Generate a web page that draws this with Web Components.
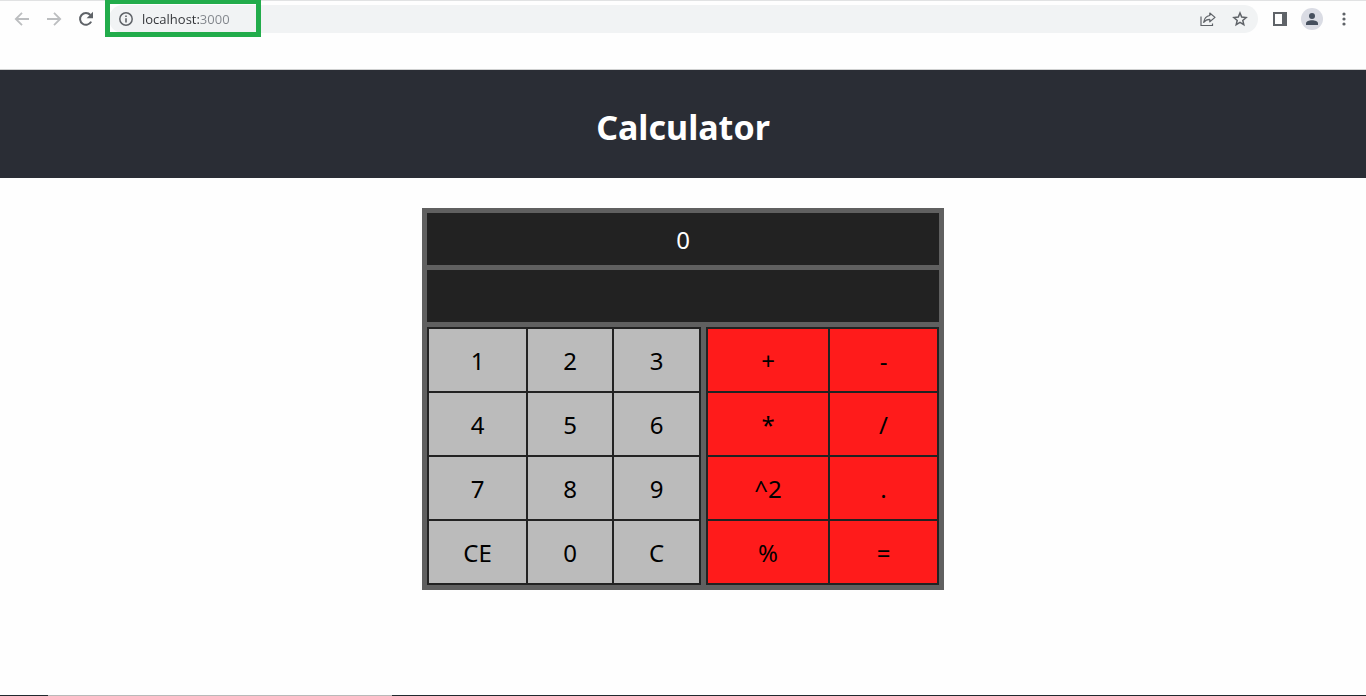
<!DOCTYPE html>
<html lang="en">
<head>
<meta charset="utf-8">
<meta name="viewport" content="width=device-width, initial-scale=1">
<title>Calculator</title>
<style>
  html, body { margin: 0; }
  body { background: #fefefe; color: #000; font-family: "Noto Sans", "Open Sans", sans-serif; }
</style>
</head>
<body>
<browser-window>
  <browser-toolbar slot="toolbar"></browser-toolbar>
  <calc-header>Calculator</calc-header>
  <calc-app></calc-app>
</browser-window>

<script>
  const attach = (host, html) => { host.attachShadow({ mode: 'open' }).innerHTML = html; };

  class BrowserWindow extends HTMLElement {
    constructor() {
      super();
      attach(this, `
        <style>
          :host { display: flex; flex-direction: column; min-height: 100vh; }
          .bookmarks { height: 31px; border-bottom: 1px solid #cfd0d0; }
          main { flex: 1; }
          .taskbar { height: 1px; display: flex; background: #20292e; }
          .search { margin-left: 48px; width: 344px; background: #b9b9b9; }
        </style>
        <slot name="toolbar"></slot>
        <div class="bookmarks"></div>
        <main><slot></slot></main>
        <div class="taskbar"><div class="search"></div></div>`);
    }
  }

  class IconButton extends HTMLElement {
    connectedCallback() {
      if (this.shadowRoot) return;
      attach(this, `
        <style>
          :host { display: block; color: var(--icon-color, #5f6368); }
          :host([disabled]) { color: #bcbec0; }
          button { display: grid; place-items: center; width: 22px; height: 22px; margin: 0; padding: 0;
                   border: 0; border-radius: 50%; background: var(--icon-bg, none); color: inherit; }
          ::slotted(svg) { display: block; }
        </style>
        <button type="button" aria-label="${this.getAttribute('label')}" ${this.hasAttribute('disabled') ? 'disabled' : ''}><slot></slot></button>`);
    }
  }

  class BrowserToolbar extends HTMLElement {
    constructor() {
      super();
      attach(this, `
        <style>
          :host { display: flex; align-items: center; position: relative; box-sizing: border-box; height: 38px;
                  padding: 0 11px 2px; border-top: 1px solid #e1e2e3; }
          nav, .tools { display: flex; gap: 10px; }
          .address { flex: 1; display: flex; align-items: center; gap: 10px; height: 28px; box-sizing: border-box;
                     margin: 0 11px 0 12px; padding: 0 7px 0 10px; border-radius: 14px; background: #f1f3f4; }
          .site { width: 14px; height: 14px; color: #5f6368; }
          input { flex: 1; min-width: 0; height: 28px; padding: 0; border: 0; outline: 0; margin-left: -1px;
                  font: 13px/28px "Open Sans", "Noto Sans", sans-serif; color: #303236;
                  background: linear-gradient(90deg, #303236 58px, #80848a 58px);
                  -webkit-background-clip: text; background-clip: text; -webkit-text-fill-color: transparent; }
          .profile { --icon-bg: #dadce4; --icon-color: #46505e; }
          .marker { position: absolute; left: 105px; top: -2px; width: 156px; height: 38px; box-sizing: border-box;
                    border: 5px solid #22ac4b; pointer-events: none; }
        </style>
        <nav>
          <icon-button label="Back" disabled><svg width="16" height="16" viewBox="0 0 16 16" fill="none" stroke="currentColor" stroke-width="1.8"><path d="M15 8H2.2M8 1.8 1.8 8 8 14.2"/></svg></icon-button>
          <icon-button label="Forward" disabled><svg width="16" height="16" viewBox="0 0 16 16" fill="none" stroke="currentColor" stroke-width="1.8"><path d="M1 8h12.8M8 1.8 14.2 8 8 14.2"/></svg></icon-button>
          <icon-button label="Reload"><svg width="16" height="16" viewBox="0 0 16 16"><path d="M13.2 10.6A5.9 5.9 0 1 1 12.4 4" fill="none" stroke="currentColor" stroke-width="2"/><path d="M15 .8v6.4H8.6z" fill="currentColor"/></svg></icon-button>
        </nav>
        <div class="address">
          <svg class="site" viewBox="0 0 14 14"><circle cx="7" cy="7" r="6.2" fill="none" stroke="currentColor" stroke-width="1.5"/><path d="M6.2 6.2h1.6v4.3H6.2zM6.2 3.5h1.6v1.6H6.2z" fill="currentColor"/></svg>
          <input type="text" aria-label="Address" value="localhost:3000" spellcheck="false">
          <icon-button label="Share"><svg width="16" height="16" viewBox="0 0 16 16" fill="none" stroke="currentColor" stroke-width="1.2"><path d="M1 5.5v9h11.5v-2"/><path d="M9.8 2 15 6.4l-5.2 4.4V8.3C7 8.3 5.2 9.2 3.7 11.4 4.2 7.7 6.2 5 9.8 4.5z" stroke-linejoin="round"/></svg></icon-button>
          <icon-button label="Bookmark this tab"><svg width="16" height="16" viewBox="0 0 16 16" fill="none" stroke="currentColor" stroke-width="1.5"><path d="m8 2 1.7 4.1 4.4.4-3.3 2.9 1 4.3L8 11.4l-3.8 2.3 1-4.3-3.3-2.9 4.4-.4z"/></svg></icon-button>
        </div>
        <div class="tools">
          <icon-button label="Side panel"><svg width="14" height="14" viewBox="0 0 14 14"><path fill="currentColor" fill-rule="evenodd" d="M0 0h14v14H0zM2 2v10h7V2z"/></svg></icon-button>
          <icon-button class="profile" label="Profile"><svg width="14" height="14" viewBox="0 0 14 14" fill="currentColor"><circle cx="7" cy="4" r="3"/><path d="M1 13v-1.5C1 9.3 4 8.3 7 8.3s6 1 6 3.2V13z"/></svg></icon-button>
          <icon-button label="Menu"><svg width="16" height="16" viewBox="0 0 16 16" fill="currentColor"><circle cx="8" cy="3" r="1.6"/><circle cx="8" cy="8" r="1.6"/><circle cx="8" cy="13" r="1.6"/></svg></icon-button>
        </div>
        <div class="marker"></div>`);
    }
  }

  class CalcHeader extends HTMLElement {
    constructor() {
      super();
      attach(this, `
        <style>
          :host { display: block; padding: 33px 16px 27px; background: #2a2d35; color: #fff; text-align: center; }
          h1 { margin: 0; font: bold 34px/48px "Noto Sans", "Open Sans", sans-serif; }
        </style>
        <h1><slot></slot></h1>`);
    }
  }

  class CalcDisplay extends HTMLElement {
    constructor() {
      super();
      attach(this, `
        <style>
          :host { display: block; height: 52px; background: #222; color: #fff; text-align: center;
                  font-size: 24px; line-height: 54px; }
        </style>
        <output><slot></slot></output>`);
    }
  }

  class CalcKey extends HTMLElement {
    constructor() {
      super();
      attach(this, `
        <style>
          :host { display: block; }
          button { display: block; width: 100%; height: 62px; margin: 0; padding: 0; border: 0;
                   background: var(--key-bg); color: #000; font: inherit; line-height: 64px; text-align: center; }
        </style>
        <button type="button"><slot></slot></button>`);
    }
  }

  class CalcKeypad extends HTMLElement {
    constructor() {
      super();
      attach(this, `
        <style>
          :host { display: grid; grid-template-columns: var(--columns); gap: 2px; padding: 2px;
                  background: #222; font-size: 24px; }
        </style>
        <slot></slot>`);
    }
  }

  class CalcApp extends HTMLElement {
    constructor() {
      super();
      const keys = list => list.map(k => `<calc-key>${k}</calc-key>`).join('');
      attach(this, `
        <style>
          :host { display: grid; gap: 5px; box-sizing: border-box; width: 100%; max-width: 522px;
                  margin: 30px auto; padding: 5px; background: #606060; }
          .pads { display: grid; grid-template-columns: 274fr 233fr; gap: 5px; }
          .digits { --key-bg: #bbb; --columns: 97fr 84fr 85fr; }
          .operators { --key-bg: #ff1b1b; --columns: 120fr 107fr; }
        </style>
        <calc-display>0</calc-display>
        <calc-display></calc-display>
        <div class="pads">
          <calc-keypad class="digits">${keys(['1', '2', '3', '4', '5', '6', '7', '8', '9', 'CE', '0', 'C'])}</calc-keypad>
          <calc-keypad class="operators">${keys(['+', '-', '*', '/', '^2', '.', '%', '='])}</calc-keypad>
        </div>`);
    }
  }

  customElements.define('icon-button', IconButton);
  customElements.define('calc-display', CalcDisplay);
  customElements.define('calc-key', CalcKey);
  customElements.define('calc-keypad', CalcKeypad);
  customElements.define('calc-header', CalcHeader);
  customElements.define('calc-app', CalcApp);
  customElements.define('browser-toolbar', BrowserToolbar);
  customElements.define('browser-window', BrowserWindow);
</script>
</body>
</html>
